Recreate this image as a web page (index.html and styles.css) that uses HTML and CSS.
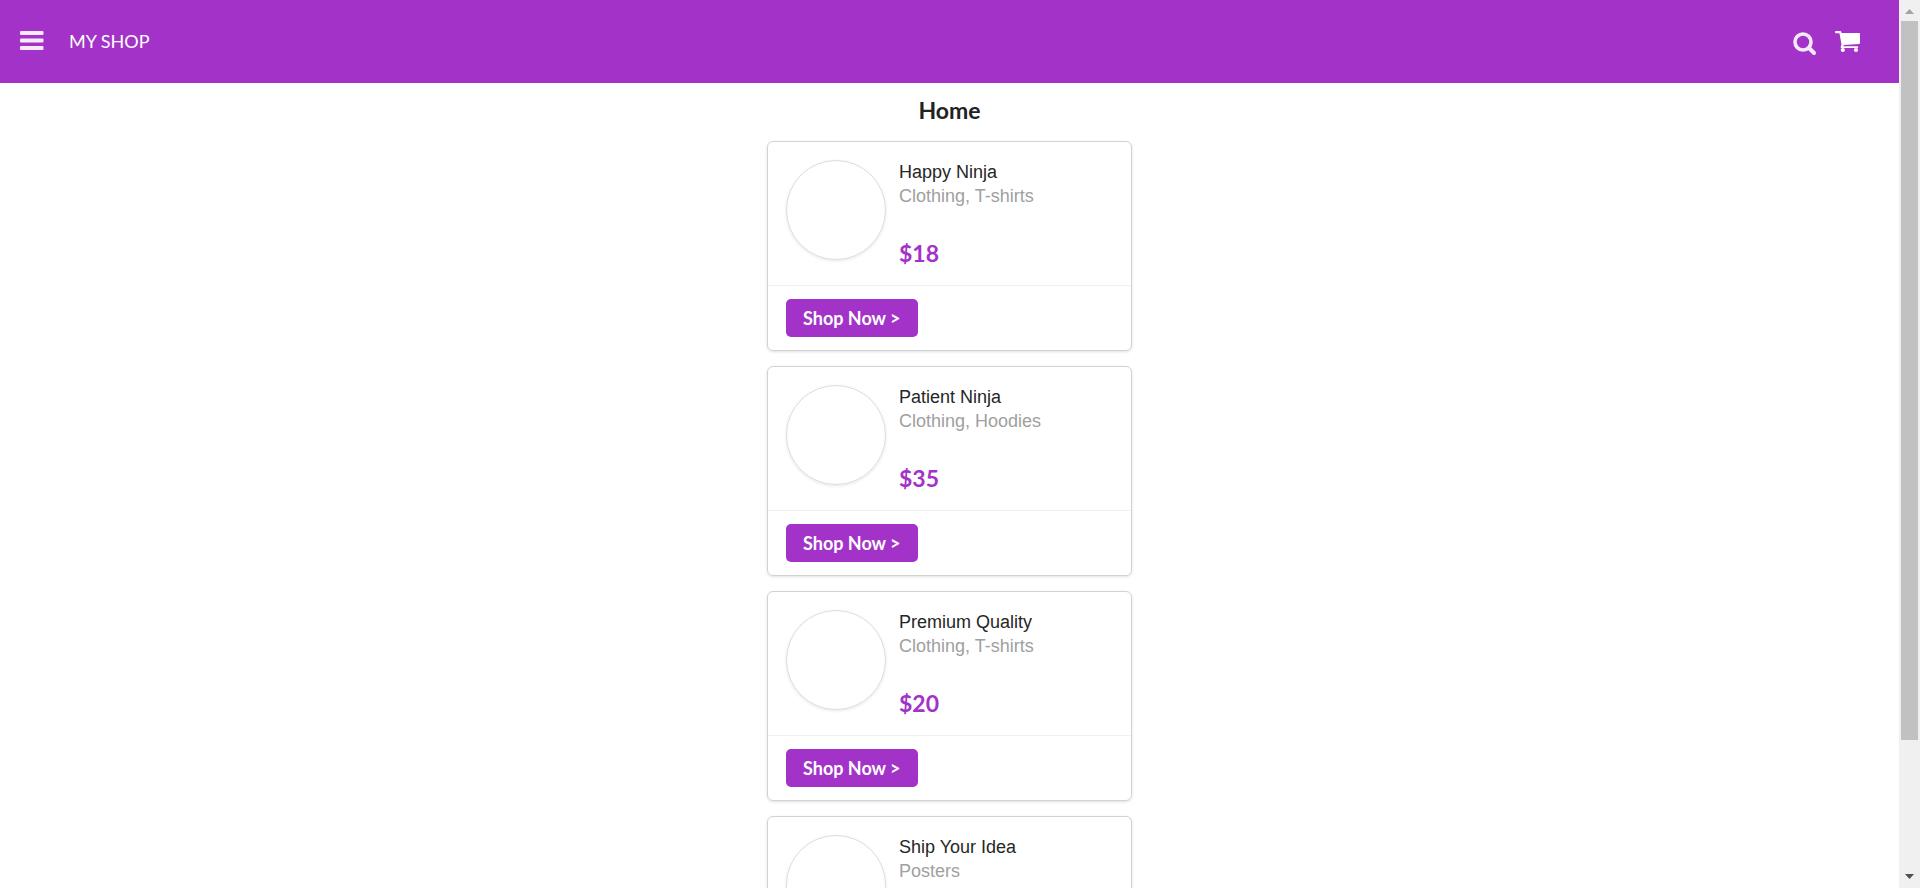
FILE: index.html
```html
<!DOCTYPE html>
<html lang="en">
<head>
<meta charset="utf-8">
<title>My Shop</title>
<link rel="stylesheet" href="styles.css">
</head>
<body>
<div class="window">
  <div class="page">
    <header class="header">
      <button class="icon-button" aria-label="Menu">
        <svg width="24" height="20" viewBox="0 0 24 20" fill="currentColor"><rect x="0" y="0" width="23.500" height="4" rx="1"/><rect x="0" y="7.500" width="23.500" height="4" rx="1"/><rect x="0" y="15" width="23.500" height="4" rx="1"/></svg>
      </button>
      <a class="brand" href="#">MY SHOP</a>
      <button class="icon-button search" aria-label="Search">
        <svg width="24" height="24" viewBox="0 0 24 24" fill="none" stroke="currentColor"><circle cx="10" cy="10" r="8" stroke-width="3.600"/><path d="M16 16l5 5" stroke-width="4" stroke-linecap="round"/></svg>
      </button>
      <button class="icon-button cart" aria-label="Cart">
        <svg width="26" height="22" viewBox="0 0 26 22" fill="currentColor"><path d="M1 0h4.200q1 0 1.200 1l.2 1h17.800q.6 0 .6.700v9.300q0 .8-.8.900L8.500 13.900v1.300h14q.8 0 .8.900t-.8.900H6.500q-.9 0-.9-1l.9-2.500L4.500 2.300H1Q0 2.300 0 1.200T1 0z"/><circle cx="7.800" cy="19" r="2.100"/><circle cx="21" cy="19" r="2.100"/></svg>
      </button>
    </header>
    <main class="main">
      <h1 class="title">Home</h1>
      <article class="card">
        <div class="content">
          <div class="photo"></div>
          <div class="info"><h2 class="name">Happy Ninja</h2><p class="meta">Clothing, T-shirts</p><p class="price">$18</p></div>
        </div>
        <div class="extra"><button class="shop">Shop Now &gt;</button></div>
      </article>
      <article class="card">
        <div class="content">
          <div class="photo"></div>
          <div class="info"><h2 class="name">Patient Ninja</h2><p class="meta">Clothing, Hoodies</p><p class="price">$35</p></div>
        </div>
        <div class="extra"><button class="shop">Shop Now &gt;</button></div>
      </article>
      <article class="card">
        <div class="content">
          <div class="photo"></div>
          <div class="info"><h2 class="name">Premium Quality</h2><p class="meta">Clothing, T-shirts</p><p class="price">$20</p></div>
        </div>
        <div class="extra"><button class="shop">Shop Now &gt;</button></div>
      </article>
      <article class="card">
        <div class="content">
          <div class="photo"></div>
          <div class="info"><h2 class="name">Ship Your Idea</h2><p class="meta">Posters</p></div>
        </div>
      </article>
    </main>
  </div>
  <div class="scrollbar" aria-hidden="true">
    <svg class="arrow up" width="9" height="5" viewBox="0 0 9 5"><path d="M0 5L4.500 0L9 5z"/></svg>
    <div class="track"><div class="thumb"></div></div>
    <svg class="arrow down" width="9" height="5" viewBox="0 0 9 5"><path d="M0 0h9L4.500 5z"/></svg>
  </div>
</div>
</body>
</html>
```
FILE: styles.css
```css
* { box-sizing: border-box; }
body { margin: 0; background: #fff; font-family: Lato, "Liberation Sans", sans-serif; }
h1, h2, p { margin: 0; }
button { font-family: inherit; border: 0; padding: 0; cursor: pointer; }
.window { display: flex; height: 100vh; overflow: hidden; }
.page { flex: 1; min-width: 0; overflow: hidden; }
.header { display: flex; align-items: center; height: 83px; padding: 0 38px 2px 20px; background: #a333c8; color: #fff; }
.icon-button { display: flex; background: none; color: #f6eafa; }
.brand { margin-left: 25px; font-size: 18px; line-height: 24px; color: #fff; text-decoration: none; }
.search { margin: 7px 18px 0 auto; }
.cart { margin-top: 3px; color: #fff; }
.main { display: flex; flex-direction: column; align-items: center; gap: 15px; padding: 13px 16px; }
.title { font-size: 23px; line-height: 28px; margin-bottom: 2px; font-weight: 700; color: #222; }
.card { width: 100%; max-width: 365px; border: 1px solid #d2d2d3; border-radius: 6px; box-shadow: 0 1px 3px #e0e0e1; }
.content { display: flex; gap: 13px; padding: 18px; height: 143px; }
.photo { width: 100px; height: 100px; border-radius: 50%; border: 1px solid #dcdcdd; box-shadow: 0 1px 3px #e6e6e7; }
.name, .meta { font-family: "Liberation Sans", Arial, sans-serif; font-size: 18px; line-height: 24px; font-weight: 400; }
.name { color: #262626; }
.meta { color: #a0a0a0; }
.price { margin-top: 30px; font-size: 23px; line-height: 30px; font-weight: 700; color: #a333c8; }
.extra { border-top: 1px solid #f0f0f0; padding: 13px 18px; }
.shop { display: block; padding: 7px 17px; border-radius: 5px; background: #a333c8; color: #fff; font-size: 18px; line-height: 24px; font-weight: 700; }
.scrollbar { width: 21px; display: flex; flex-direction: column; align-items: center; background: #f0f0f0; padding: 9px 0; }
.arrow { flex: none; }
.up { fill: #a3a3a3; }
.down { fill: #505050; }
.track { flex: 1; width: 17px; padding: 7px 0; }
.thumb { height: 85%; background: #c1c1c1; }
```
